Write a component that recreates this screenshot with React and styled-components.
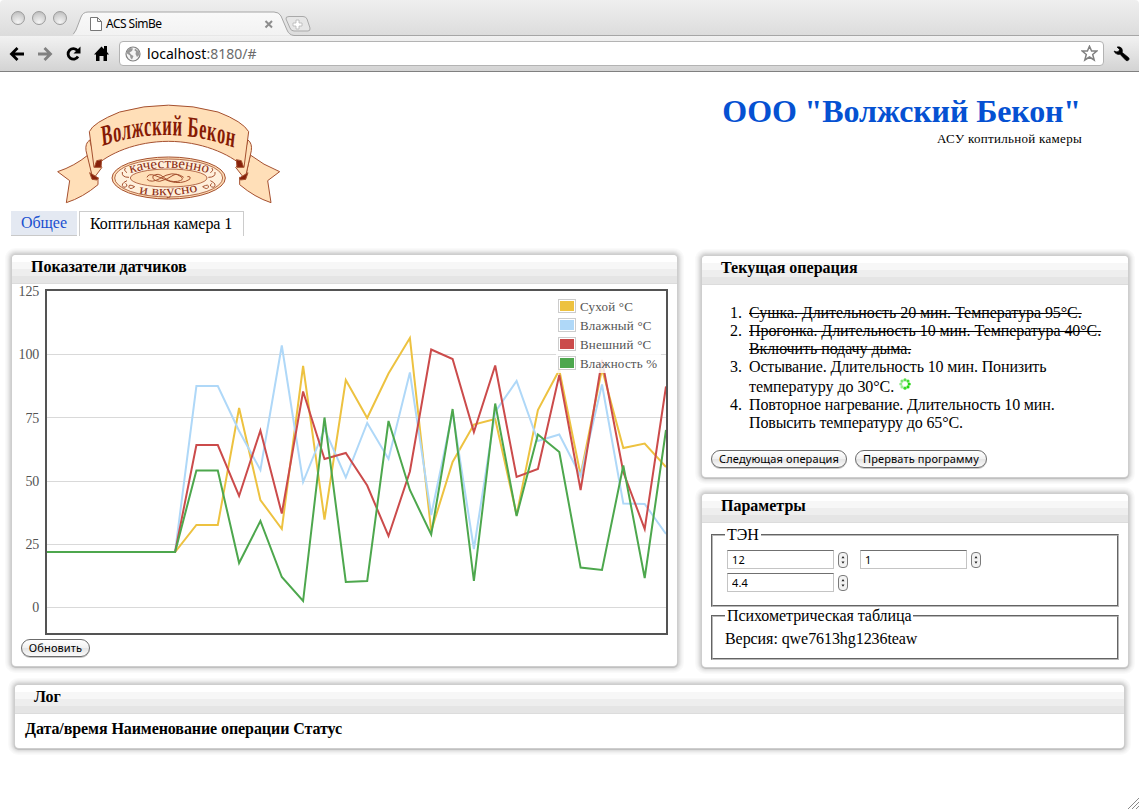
import React from "react";
import styled, { createGlobalStyle, css } from "styled-components";

const serif = `"Liberation Serif", "Times New Roman", serif`;
const ui = `"Noto Sans", "Open Sans", sans-serif`;

const Global = createGlobalStyle`
  * { box-sizing: border-box; }
  body { margin: 0; background: #fff; color: #000; font: 16px/18px ${serif}; overflow: hidden; }
`;

const Window = styled.div`
  position: relative;
  display: flex;
  flex-direction: column;
  height: 809px;
  overflow: hidden;
`;

/* ---------- browser chrome ---------- */
const TabStrip = styled.div`
  display: flex;
  height: 36px;
  background: linear-gradient(#efefef, #dcdcdc);
  border-radius: 4px 4px 0 0;
`;
const Lights = styled.div`
  display: flex;
  gap: 7px;
  padding: 11px 0 0 11px;
  width: 73px;
`;
const Light = styled.i`
  width: 14px;
  height: 14px;
  border-radius: 50%;
  border: 1px solid #9b9b9b;
  background: radial-gradient(circle at 50% 85%, #f4f4f4 0, #d2d2d2 60%, #b4b4b4 100%);
`;
const TabShapes = styled.svg`
  display: block;
  width: 1066px;
  height: 36px;
  font: 12px ${ui};
`;
const Toolbar = styled.div`
  display: flex;
  align-items: center;
  height: 36px;
  padding: 0 7px 0 9px;
  background: linear-gradient(#f2f2f2, #d3d3d3);
  border-bottom: 1px solid #808080;
`;
const NavIcons = styled.svg`
  width: 110px;
  height: 34px;
  flex: none;
`;
const AddressBar = styled.div`
  display: flex;
  align-items: center;
  width: 985px;
  height: 25px;
  padding: 0 5px 0 5px;
  background: #fff;
  border: 1px solid #b3b3b3;
  border-radius: 4px;
`;
const Url = styled.span`
  flex: 1;
  margin-left: 6px;
  font: 14px/22px ${ui};
  letter-spacing: 0.03px;
  color: #000;
  span { color: #6b6b6b; }
`;
const Wrench = styled.svg`
  margin-left: 8px;
  width: 20px;
  height: 20px;
`;

/* ---------- page ---------- */
const Header = styled.header`
  display: flex;
  justify-content: space-between;
  height: 139px;
  padding: 28px 57px 0 53px;
`;
const Company = styled.div`
  text-align: right;
  h1 {
    margin: -7px 1px 0 0;
    font: bold 32px/36px ${serif};
    letter-spacing: -0.12px;
    color: #0551d2;
  }
  p { margin: 2px 0 0; font-size: 13px; line-height: 16px; letter-spacing: 0.3px; }
`;
const Tabs = styled.nav`
  display: flex;
  gap: 2px;
  height: 44px;
  padding-left: 11px;
`;
const Tab = styled.a`
  height: 25px;
  padding: 0 10px;
  line-height: 24px;
  letter-spacing: -0.05px;
  white-space: nowrap;
  ${(p) =>
    p.$active
      ? css`border: 1px solid #ccc; border-bottom: 0; line-height: 24px; width: 165px;`
      : css`background: #e4e9f2; color: #1a50d0; border-bottom: 1px solid #c9c9c9; width: 66px;`}
`;
const Columns = styled.main`
  display: flex;
  gap: 25px;
  padding-left: 12px;
`;
const Side = styled.div`
  display: flex;
  flex-direction: column;
  gap: 17px;
  padding-top: 1px;
`;
const Panel = styled.section`
  width: ${(p) => p.$w}px;
  height: ${(p) => p.$h}px;
  background: #fff;
  border-radius: 4px;
  box-shadow: 0 0 0 1px #cecece, 0 1px 0 1px #c0c0c0, 0 0 0 2px #d4d4d4, 0 0 0 3px #dedede,
    0 0 0 4px #e8e8e8, 0 0 0 5px #f0f0f0, 0 0 0 6px #f6f6f6, 0 0 0 7px #fafafa;
`;
const PanelTitle = styled.h2`
  margin: 0;
  height: 29px;
  padding: 3px 0 0 19px;
  font: bold 16px/18px ${serif};
  border-radius: 4px 4px 0 0;
  border-bottom: 1px solid #dcdcdc;
  background: linear-gradient(#fff 7px, #f7f7f7 7px 14px, #eee 14px 21px, #e5e5e5 21px);
`;
const Log = styled.div`
  padding: 18px 0 0 15px;
`;
const LogHead = styled.div`
  padding: 6px 10px;
  font-weight: bold;
  letter-spacing: -0.08px;
`;
const ChartBox = styled.div`
  display: flex;
  height: 355px;
  padding-top: 5px;
`;
const Axis = styled.div`
  width: 33px;
  padding-right: 6px;
  font-size: 14px;
  letter-spacing: -0.2px;
  line-height: 16px;
  text-align: right;
  color: #545454;
  div { height: 63.25px; }
  margin-top: -5px;
`;
const Plot = styled.div`
  position: relative;
  width: 623px;
  height: 346px;
  svg { display: block; }
`;
const Legend = styled.div`
  position: absolute;
  top: 8px;
  right: 7px;
  width: 105px;
  height: 76px;
  background: rgba(255, 255, 255, 0.85);
`;
const LegendRow = styled.div`
  display: flex;
  align-items: center;
  gap: 4px;
  height: 19px;
  font-size: 13px;
  letter-spacing: 0.2px;
  white-space: nowrap;
  color: #545454;
`;
const Swatch = styled.i`
  width: 18px;
  height: 14px;
  margin: -2px 0 0 2px;
  flex: none;
  border: 1px solid #ccc;
  padding: 1px;
  background: ${(p) => p.$c} content-box;
`;
const Button = styled.button`
  width: ${(p) => p.$w}px;
  height: 18px;
  padding: 0 0 1px;
  border: 1px solid #6b6b6b;
  border-radius: 9px;
  background: linear-gradient(#fff 0, #f1f1f1 48%, #e4e4e4 52%, #fbfbfb 100%);
  box-shadow: 0 1px 0 #c9c9c9;
  font: 11px/14px ${ui};
  letter-spacing: 0.12px;
  white-space: nowrap;
  color: #000;
`;
const Buttons = styled.div`
  display: flex;
  gap: 8px;
  padding-left: 9px;
`;
const Steps = styled.ol`
  margin: 0;
  padding: 19px 20px 0 28px;
  height: 165px;
  list-style: none;
`;
const Step = styled.li`
  display: flex;
  gap: 7px;
  white-space: nowrap;
`;
const StepText = styled.div`
  display: flex;
  flex-direction: column;
  letter-spacing: ${(p) => (p.$done ? -0.06 : -0.15)}px;
  text-decoration: ${(p) => (p.$done ? "line-through" : "none")};
`;
const StepLine = styled.span`
  ${(p) => p.$busy && css`padding-top: 2px; letter-spacing: -0.06px;`}
  svg { margin: 0 0 2px 5px; vertical-align: bottom; display: inline-block; }
`;
const Group = styled.fieldset`
  margin: 0 9px 0 9px;
  padding: ${(p) => p.$pad};
  height: ${(p) => p.$h}px;
  border: 2px groove #b8b8b8;
  legend { padding: 0 2px; margin-left: ${(p) => p.$shift}px; letter-spacing: -0.07px; }
`;
const Groups = styled.div`
  padding-top: 3px;
  letter-spacing: -0.07px;
`;
const Fields = styled.div`
  display: grid;
  grid-template-columns: 133px 133px;
  row-gap: 4px;
`;
const Field = styled.label`
  display: flex;
  align-items: center;
  gap: 4px;
  height: 19px;
`;
const Input = styled.input`
  width: 107px;
  height: 19px;
  padding: 0 4px;
  border: 1px solid #c4c4c4;
  border-top: 1px solid #707070;
  outline: 0;
  font: 11px ${ui};
  letter-spacing: 0.1px;
`;
const Grip = styled.svg`
  position: absolute;
  right: 0;
  bottom: 0;
`;

const STEP = 619 / 29;
const FLAT = [552, 552, 552, 552, 552, 552, 552];
const series = [
  { name: "Сухой °C", color: "#edc240", y: [...FLAT, 525, 525, 408, 500, 529, 366, 519.5, 380, 418, 373.5, 338, 531, 462, 424.5, 419, 515, 410, 370, 475, 369, 448, 443.5, 467] },
  { name: "Влажный °C", color: "#afd8f8", y: [...FLAT, 386, 386, 431, 470, 345.5, 482, 429, 477.5, 423, 459, 372.5, 515, 412, 549, 412, 381, 441, 434.5, 476, 384.5, 503.5, 504, 534] },
  { name: "Внешний °C", color: "#cb4b4b", y: [...FLAT, 445, 445, 496, 430.5, 513.5, 391.5, 459, 453, 485.5, 536, 471.5, 349.5, 359, 432, 365.5, 477, 469, 375, 490, 360, 472, 529, 386.5] },
  { name: "Влажность %", color: "#4da74d", y: [...FLAT, 470.5, 470.5, 563, 521, 577, 601, 417.5, 582, 581, 421, 490, 534.5, 409, 581, 403.5, 516, 434.5, 452, 567.5, 570, 465.5, 578, 430] },
];

function Chart() {
  return (
    <Plot>
      <svg width="623" height="346" viewBox="45 289 623 346">
        {[607.5, 544.5, 481.5, 417.5, 354.5].map((y) => (
          <path key={y} d={`M47 ${y}H666`} stroke="#d9d9d9" />
        ))}
        {series.map((s) => (
          <polyline key={s.name} fill="none" stroke={s.color} strokeWidth="2"
            points={s.y.map((y, i) => `${(47 + i * STEP).toFixed(1)},${y}`).join(" ")} />
        ))}
        <rect x="46" y="290" width="621" height="344" fill="none" stroke="#545454" strokeWidth="2" />
      </svg>
      <Legend>
        {series.map((s) => (
          <LegendRow key={s.name}><Swatch $c={s.color} />{s.name}</LegendRow>
        ))}
      </Legend>
    </Plot>
  );
}

function Logo() {
  return (
    <svg width="230" height="107" viewBox="40 30 690 321" fill="#ffdfb8" stroke="#a5502f" strokeWidth="3" strokeLinejoin="round">
      <path d="M145 195Q105 228 54 245L90 272L80 338Q130 322 175 284V262L160 268Z" />
      <path d="M632 195Q670 225 720 245L684 272L694 338Q645 322 600 284V262L616 268Z" />
      <path d="M150 150Q136 160 139 182L160 268L187 232L168 215Z" />
      <path d="M625 150Q638 160 635 182L616 268L588 232L607 215Z" />
      <path d="M157 268L150 248L176 264L172 270ZM618 268L625 248L599 264L602 270Z" fill="#86200a" />
      <path d="M149 125Q160 98 240 66Q385 25 535 66Q610 95 627 125L613 232C570 190 480 154 387 154C290 154 205 190 163 232Z" />
      <path d="M164 232L171 212L186 209L184 232ZM612 232L605 212L590 209L592 232Z" fill="#86200a" />
      <ellipse cx="387" cy="264" rx="170" ry="63" />
      <ellipse cx="387" cy="264" rx="162" ry="57" fill="#fff0dc" strokeWidth="2.5" />
      <ellipse cx="387" cy="264" rx="115" ry="27" strokeWidth="2.5" />
      <g fill="none" strokeWidth="3">
        <path d="M322 262Q326 250 345 256L390 274Q425 284 450 268Q455 258 443 260M322 268Q335 280 360 266Q400 240 424 260Q436 270 414 274Q390 278 372 262Q355 246 340 258Q336 272 360 274Q385 268 400 256Q412 248 432 262" />
        <path d="M262 248Q250 240 258 234M268 262Q245 262 248 246M262 272Q240 282 252 292Q268 290 258 280M285 290Q265 280 268 292Q272 300 285 290M512 248Q524 240 516 234M506 262Q529 262 526 246M512 272Q534 282 522 292Q506 290 516 280M489 290Q509 280 506 292Q502 300 489 290" />
      </g>
      <path id="upper" d="M272 249Q387 218 504 249" fill="none" stroke="none" />
      <path id="lower" d="M298 310Q387 325 480 303" fill="none" stroke="none" />
      <g fill="#8c2c12" stroke="none" fontFamily="Liberation Serif, serif">
        <text fontSize="43"><textPath href="#upper" textLength="236" lengthAdjust="spacingAndGlyphs">качественно</textPath></text>
        <text fontSize="41"><textPath href="#lower" textLength="178" lengthAdjust="spacingAndGlyphs">и вкусно</textPath></text>
        <g transform="scale(.56 1)" fill="#861a04">
          <path id="name" d="M336 168Q690 100 1048 174" fill="none" />
          <text fontSize="88" fontWeight="bold"><textPath href="#name" textLength="712">Волжский Бекон</textPath></text>
        </g>
      </g>
    </svg>
  );
}

function Spinner() {
  const dots = [0, 1, 2, 3, 4, 5, 6, 7];
  return (
    <svg width="12" height="16" viewBox="-6 -6 12 16" fill="#22d611">
      {dots.map((i) => {
        const a = (i * Math.PI) / 4;
        return <circle key={i} cx={4.2 * Math.sin(a)} cy={-4.2 * Math.cos(a)} r="1.6" opacity={[0.75, 0.85, 1, 1, 0.9, 0.45, 0.5, 0.6][i]} />;
      })}
    </svg>
  );
}

function Stepper() {
  return (
    <svg width="10" height="16" viewBox="0 0 10 16">
      <rect x=".5" y=".5" width="9" height="15" rx="3.5" fill="#f2f2f2" stroke="#7b7b7b" />
      <path d="M5 4L6.500 6.300H3.500ZM5 11.800L6.500 9.500H3.500Z" fill="#222" />
    </svg>
  );
}

function Browser() {
  return (
    <>
      <TabStrip>
        <Lights><Light /><Light /><Light /></Lights>
        <TabShapes viewBox="73 0 1066 36">
          <defs>
            <linearGradient id="tab" x2="0" y2="1"><stop stopColor="#f9f9f9" /><stop offset="1" stopColor="#f2f2f2" /></linearGradient>
          </defs>
          <path d="M0 35.5H70Q74 35 76 30L81 17Q83 12 88 12H274Q279 12 281 16L287 30Q289 35 294 35.5H1139" fill="url(#tab)" stroke="#a6a6a6" />
          <path d="M289 16.5H303Q306 16.5 307 19L310 28Q310.5 31 308 31H294Q291 31 290 28L286 19Q285.500 16.500 289 16.500Z" fill="#e6e6e6" stroke="#a9a9a9" />
          <path d="M296 20h3v3h3v3h-3v3h-3v-3h-3v-3h3z" fill="#fff" stroke="#b5b5b5" strokeWidth=".8" />
          <path d="M90.500 17.500H97.500L101.500 21.500V30.500H90.500ZM97.500 17.500V21.500H101.500" fill="#fff" stroke="#777" />
          <text x="106" y="28" textLength="56">ACS SimBe</text>
          <path d="M265.500 21L272 27.500M272 21L265.500 27.500" stroke="#8d8d8d" strokeWidth="2" />
        </TabShapes>
      </TabStrip>
      <Toolbar>
        <NavIcons viewBox="9 37 110 34" fill="none" strokeWidth="2.8">
          <path d="M24 54H12M17.500 48L11.500 54L17.500 60" stroke="#000" />
          <path d="M38 54H50M44.500 48L50.500 54L44.500 60" stroke="#808080" />
          <path d="M77.500 50.500A5.300 5.300 0 1 0 78 56.500" stroke="#000" />
          <path d="M80.500 46.500V53.500H73.500Z" fill="#000" />
          <path d="M94 54.500L101.500 46.500L104 49V46H107V52L109 54.500H107V61H103.500V56H99.500V61H96V54.500Z" fill="#000" />
        </NavIcons>
        <AddressBar>
          <svg width="16" height="16" viewBox="0 0 16 16">
            <circle cx="8" cy="8" r="7" fill="#f5f5f5" stroke="#808080" strokeWidth="1.200" />
            <path d="M2 5L5 2L8 2.500L7 5L4.500 6.500L6 8.500L8.500 10L7 13.500L5.500 12L5 9.500L2 7.500ZM10 2.500L14 5.500L14.300 9L12 11L10.500 8L11 5.500L9.500 4.500Z" fill="#999" />
          </svg>
          <Url>localhost<span>:8180/#</span></Url>
          <svg width="17" height="17" viewBox="0 0 17 17">
            <path d="M8.500 1.200L10.600 6H15.800L11.700 9.500L13.200 15L8.500 12L3.800 15L5.300 9.500L1.200 6H6.400Z" fill="#fff" stroke="#818181" strokeWidth="1.500" />
          </svg>
        </AddressBar>
        <Wrench viewBox="0 0 20 20">
          <path d="M2 7Q3 10 6 10.500L8 10.300L14 16.500Q16 17.500 17 15.500Q17.500 14.500 16.500 13.500L10.300 8.500Q11 6 9.500 4Q7.500 2.200 5 3L7.500 5.500L6.500 7.500L4.500 7.800Z" fill="#000" stroke="#000" strokeWidth=".6" />
        </Wrench>
      </Toolbar>
    </>
  );
}

const steps = [
  { done: true, lines: ["Сушка. Длительность 20 мин. Температура 95°C."] },
  { done: true, lines: ["Прогонка. Длительность 10 мин. Температура 40°C.", "Включить подачу дыма."] },
  { active: true, lines: ["Остывание. Длительность 10 мин. Понизить", "температуру до 30°C."] },
  { lines: ["Повторное нагревание. Длительность 10 мин.", "Повысить температуру до 65°C."] },
];

export default function App() {
  return (
    <Window>
      <Global />
      <Browser />
      <Header>
        <Logo />
        <Company>
          <h1>ООО "Волжский Бекон"</h1>
          <p>АСУ коптильной камеры</p>
        </Company>
      </Header>
      <Tabs>
        <Tab>Общее</Tab>
        <Tab $active>Коптильная камера 1</Tab>
      </Tabs>
      <Columns>
        <Panel $w={665} $h={411}>
          <PanelTitle>Показатели датчиков</PanelTitle>
          <ChartBox>
            <Axis>
              {[125, 100, 75, 50, 25, 0].map((v) => <div key={v}>{v}</div>)}
            </Axis>
            <Chart />
          </ChartBox>
          <Buttons><Button $w={69}>Обновить</Button></Buttons>
        </Panel>
        <Side>
          <Panel $w={426} $h={221}>
            <PanelTitle>Текущая операция</PanelTitle>
            <Steps>
              {steps.map((s, n) => (
                <Step key={n}>
                  <span>{n + 1}.</span>
                  <StepText $done={s.done}>
                    {s.lines.map((line, i) => {
                      const busy = s.active && i === s.lines.length - 1;
                      return (
                        <StepLine key={line} $busy={busy}>
                          {line}
                          {busy && <Spinner />}
                        </StepLine>
                      );
                    })}
                  </StepText>
                </Step>
              ))}
            </Steps>
            <Buttons><Button $w={136}>Следующая операция</Button><Button $w={132}>Прервать программу</Button></Buttons>
          </Panel>
          <Panel $w={426} $h={173}>
            <PanelTitle>Параметры</PanelTitle>
            <Groups>
              <Group $h={81} $pad="6px 14px" $shift={-2}>
                <legend>ТЭН</legend>
                <Fields>
                  {["12", "1", "4.4"].map((v) => (
                    <Field key={v}><Input defaultValue={v} /><Stepper /></Field>
                  ))}
                </Fields>
              </Group>
              <Group $h={53} $pad="5px 12px" $shift={0}>
                <legend>Психометрическая таблица</legend>
                Версия: qwe7613hg1236teaw
              </Group>
            </Groups>
          </Panel>
        </Side>
      </Columns>
      <Log>
        <Panel $w={1109} $h={63}>
          <PanelTitle>Лог</PanelTitle>
          <LogHead>Дата/время Наименование операции Статус</LogHead>
        </Panel>
      </Log>
      <Grip width="12" height="12" viewBox="0 0 12 12">
        <path d="M1 12L12 1M5 12L12 5M9 12L12 9" stroke="#8a8a8a" />
      </Grip>
    </Window>
  );
}
